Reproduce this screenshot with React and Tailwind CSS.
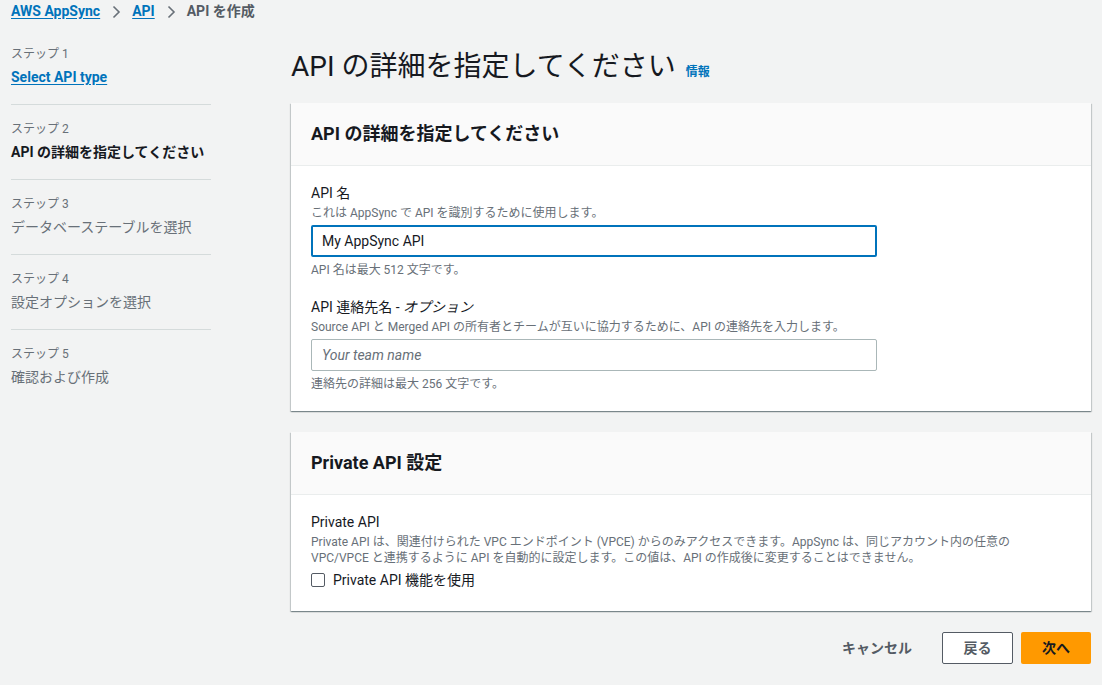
import { useState } from 'react';

const steps = [
  { label: 'ステップ 1', title: 'Select API type', state: 'link' },
  { label: 'ステップ 2', title: 'API の詳細を指定してください', state: 'current' },
  { label: 'ステップ 3', title: 'データベーステーブルを選択', state: 'todo' },
  { label: 'ステップ 4', title: '設定オプションを選択', state: 'todo' },
  { label: 'ステップ 5', title: '確認および作成', state: 'todo' },
];

const font = { fontFamily: 'Roboto, "Noto Sans CJK JP", sans-serif' };

function Chevron() {
  return (
    <svg width="16" height="16" viewBox="0 0 16 16" className="mx-[8px] text-[#687078]">
      <path d="M5.5 2.5 11 8l-5.5 5.5" fill="none" stroke="currentColor" strokeWidth="1.6" />
    </svg>
  );
}

function Card({ title, children, bodyClass }) {
  return (
    <div className="bg-white shadow-[0_1px_1px_0_rgba(0,28,36,0.3),1px_1px_1px_0_rgba(0,28,36,0.15),-1px_1px_1px_0_rgba(0,28,36,0.15)]">
      <div className="bg-[#fafafa] border-b border-[#eaeded] px-5 py-5">
        <h2 className="text-[18px] leading-[22px] font-bold text-[#16191f]">{title}</h2>
      </div>
      <div className={`px-5 ${bodyClass}`}>{children}</div>
    </div>
  );
}

export default function App() {
  const [name, setName] = useState('My AppSync API');
  const [team, setTeam] = useState('');
  const [priv, setPriv] = useState(false);

  return (
    <div style={font} className="min-h-[685px] bg-[#f2f3f3] text-[#16191f] px-[11px]">
      <nav className="flex items-center h-[23px] text-[14px] font-bold">
        <a href="#" className="text-[#0073bb] underline underline-offset-2">AWS AppSync</a>
        <Chevron />
        <a href="#" className="text-[#0073bb] underline underline-offset-2">API</a>
        <Chevron />
        <span className="text-[#545b64]">API を作成</span>
      </nav>

      <div className="flex gap-[80px]">
        <ul className="w-[200px] shrink-0 pt-[7px]">
          {steps.map((s, i) => (
            <li key={i} className={`pt-4 pb-[17px] ${i < steps.length - 1 ? 'border-b border-[#d5dbdb]' : ''}`}>
              <div className="text-[12px] leading-4 text-[#687078]">{s.label}</div>
              <div className="mt-[5px] text-[14px] leading-5">
                {s.state === 'link' && (
                  <a href="#" className="text-[#0073bb] font-bold underline underline-offset-2">{s.title}</a>
                )}
                {s.state === 'current' && <span className="font-bold text-[#16191f]">{s.title}</span>}
                {s.state === 'todo' && <span className="text-[#687078]">{s.title}</span>}
              </div>
            </li>
          ))}
        </ul>

        <main className="w-[800px] pt-[26px]">
          <div className="flex items-baseline gap-[10px] mb-[18px]">
            <h1 className="text-[28px] leading-[36px] font-normal text-[#16191f]">API の詳細を指定してください</h1>
            <a href="#" className="text-[12px] font-bold text-[#0073bb]">情報</a>
          </div>

          <Card title="API の詳細を指定してください" bodyClass="pt-[17px] pb-[19px]">
            <div className="text-[14px] leading-5">API 名</div>
            <div className="mt-[2px] text-[12px] leading-4 text-[#687078]">これは AppSync で API を識別するために使用します。</div>
            <input
              value={name}
              onChange={(e) => setName(e.target.value)}
              className="block mt-1 w-[566px] h-[32px] px-[9px] text-[14px] border-2 border-[#0073bb] rounded-[2px] outline-none bg-white"
            />
            <div className="mt-[5px] text-[12px] leading-4 text-[#687078]">API 名は最大 512 文字です。</div>

            <div className="mt-[19px] text-[14px] leading-5">API 連絡先名 - <i>オプション</i></div>
            <div className="mt-[2px] text-[12px] leading-4 text-[#687078]">Source API と Merged API の所有者とチームが互いに協力するために、API の連絡先を入力します。</div>
            <input
              value={team}
              onChange={(e) => setTeam(e.target.value)}
              placeholder="Your team name"
              className="block mt-1 w-[566px] h-[32px] px-[10px] text-[14px] border border-[#aab7b8] rounded-[2px] outline-none bg-white placeholder:italic placeholder:text-[#687078]"
            />
            <div className="mt-[5px] text-[12px] leading-4 text-[#687078]">連絡先の詳細は最大 256 文字です。</div>
          </Card>

          <div className="mt-[21px]">
            <Card title="Private API 設定" bodyClass="pt-[17px] pb-[21px]">
              <div className="text-[14px] leading-5">Private API</div>
              <div className="mt-[2px] text-[12px] leading-4 text-[#687078] max-w-[740px]">
                Private API は、関連付けられた VPC エンドポイント (VPCE) からのみアクセスできます。AppSync は、同じアカウント内の任意の VPC/VPCE と連携するように API を自動的に設定します。この値は、API の作成後に変更することはできません。
              </div>
              <label className="mt-[4px] flex items-center gap-2 text-[14px] leading-5 cursor-pointer">
                <input
                  type="checkbox"
                  checked={priv}
                  onChange={(e) => setPriv(e.target.checked)}
                  className="appearance-none w-[14px] h-[14px] border border-[#545b64] rounded-[2px] bg-white checked:bg-[#0073bb]"
                />
                Private API 機能を使用
              </label>
            </Card>
          </div>

          <div className="mt-[21px] flex justify-end items-center">
            <button className="px-5 h-[32px] text-[14px] font-bold text-[#545b64] mr-[10px]">キャンセル</button>
            <button className="w-[71px] h-[32px] text-[14px] font-bold text-[#545b64] bg-white border border-[#545b64] rounded-[2px] mr-[8px]">戻る</button>
            <button className="w-[70px] h-[32px] text-[14px] font-bold text-[#16191f] bg-[#ff9900] rounded-[2px]">次へ</button>
          </div>
        </main>
      </div>
    </div>
  );
}
